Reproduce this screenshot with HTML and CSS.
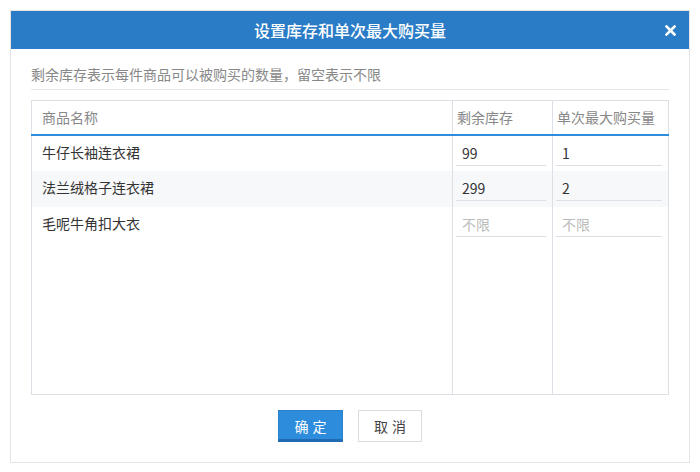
FILE: index.html
```html
<!DOCTYPE html>
<html lang="zh">
<head>
<meta charset="utf-8">
<title>设置库存和单次最大购买量</title>
<link rel="stylesheet" href="styles.css">
</head>
<body>
<div class="dialog">
  <div class="dialog-header">
    <span class="dialog-title">设置库存和单次最大购买量</span>
    <span class="dialog-close"><svg width="11" height="11" viewBox="0 0 11 11"><path d="M1.5 1.5L9.5 9.5M9.5 1.5L1.5 9.5" stroke="#fff" stroke-width="2.6" stroke-linecap="square"/></svg></span>
  </div>
  <div class="dialog-body">
    <div class="desc">剩余库存表示每件商品可以被购买的数量，留空表示不限</div>
    <table class="stock-table">
      <thead>
        <tr>
          <th class="col-name">商品名称</th>
          <th class="col-stock">剩余库存</th>
          <th class="col-max">单次最大购买量</th>
        </tr>
      </thead>
      <tbody>
        <tr>
          <td class="name">牛仔长袖连衣裙</td>
          <td><div class="field">99</div></td>
          <td><div class="field">1</div></td>
        </tr>
        <tr class="alt">
          <td class="name">法兰绒格子连衣裙</td>
          <td><div class="field">299</div></td>
          <td><div class="field">2</div></td>
        </tr>
        <tr>
          <td class="name">毛呢牛角扣大衣</td>
          <td><div class="field placeholder">不限</div></td>
          <td><div class="field placeholder">不限</div></td>
        </tr>
        <tr class="filler">
          <td></td><td></td><td></td>
        </tr>
      </tbody>
    </table>
    <div class="actions">
      <button class="btn btn-primary">确定</button>
      <button class="btn btn-default">取消</button>
    </div>
  </div>
</div>
</body>
</html>
```
FILE: styles.css
```css
* { box-sizing: border-box; }
html, body { margin: 0; padding: 0; background: #fff; }
body {
  font-family: "Noto Sans CJK SC", "Noto Sans", sans-serif;
  font-size: 14px;
  color: #333;
}
.dialog {
  margin: 10px 0 0 10px;
  width: 680px;
  height: 453px;
  border: 1px solid #e4e4e4;
  display: flex;
  flex-direction: column;
}
.dialog-header {
  position: relative;
  height: 38px;
  background: #2a7cc6;
  color: #fff;
  display: flex;
  align-items: center;
  justify-content: center;
}
.dialog-title {
  font-size: 16px;
  font-weight: 500;
  line-height: 38px;
}
.dialog-close {
  position: absolute;
  right: 13px;
  top: 14px;
  width: 11px;
  height: 11px;
  display: flex;
}
.dialog-body {
  padding: 0 20px;
  flex: 1;
  display: flex;
  flex-direction: column;
}
.desc {
  padding: 15px 0 5px;
  line-height: 20px;
  font-size: 14px;
  color: #888;
  border-bottom: 1px solid #e6e6e6;
}
.stock-table {
  margin-top: 10px;
  width: 638px;
  height: 295px;
  border-collapse: collapse;
  table-layout: fixed;
  border: 1px solid #dcdfe6;
}
.stock-table th {
  height: 34px;
  font-weight: normal;
  color: #888;
  text-align: left;
  padding: 0 0 0 4px;
  border-bottom: 2px solid #2d8cdc;
  border-left: 1px solid #dcdfe6;
  white-space: nowrap;
}
.stock-table th.col-name { padding-left: 10px; border-left: none; }
.stock-table th.col-stock { width: 100px; }
.stock-table th.col-max { width: 116px; }
.stock-table td {
  height: 36px;
  padding: 0 0 0 3px;
  border-left: 1px solid #dcdfe6;
  vertical-align: top;
}
.stock-table td.name {
  padding-left: 10px;
  padding-bottom: 3px;
  border-left: none;
  vertical-align: middle;
  color: #333;
}
.stock-table tr.alt td { background: #f7f8fa; }
.stock-table tr.filler td { height: auto; }
.field {
  margin-top: 6px;
  width: calc(100% - 6px);
  height: 24px;
  line-height: 23px;
  padding-left: 6px;
  border-bottom: 1px solid #dcdfe6;
  color: #333;
}
.field.placeholder { color: #bbb; }
.actions {
  display: flex;
  justify-content: center;
  gap: 15px;
  margin-top: 15px;
}
.btn {
  height: 32px;
  font-family: inherit;
  font-size: 14px;
  letter-spacing: 4px;
  padding: 0 0 0 4px;
  cursor: pointer;
}
.btn-primary {
  width: 65px;
  background: #2d8cdc;
  color: #fff;
  border: 1px solid #2a80c9;
  border-bottom: 3px solid #1f6ab0;
  padding-top: 2px;
}
.btn-default {
  width: 64px;
  background: #fff;
  color: #444;
  border: 1px solid #dcdcdc;
}
```
